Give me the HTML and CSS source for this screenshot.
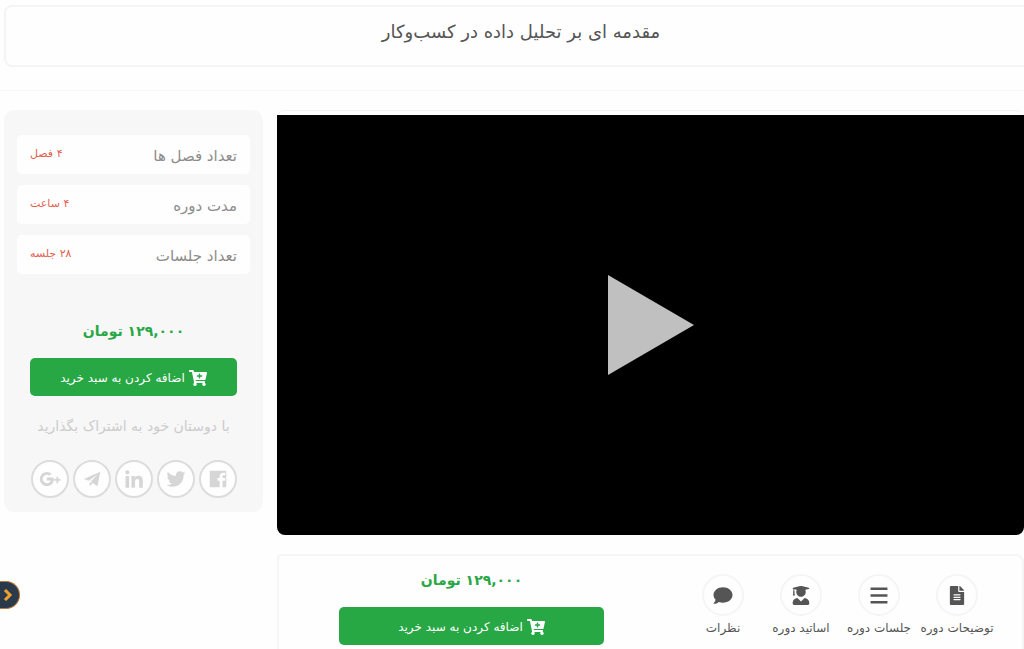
FILE: index.html
```html
<!DOCTYPE html>
<html lang="fa" dir="rtl">

<head>
  <meta charset="UTF-8">
  <meta name="viewport" content="width=device-width, initial-scale=1">
  <title>مقدمه ای بر تحلیل داده در کسب‌وکار</title>
  <link rel="stylesheet" href="styles.css">
</head>

<body>
  <svg class="sprite" aria-hidden="true">
    <symbol id="cart" viewBox="0 0 576 512">
      <path d="M504.717 320H211.572l6.545 32h268.418c15.401 0 26.816 14.301 23.403 29.319l-5.517 24.276C523.112 414.668 536 433.828 536 456c0 31.202-25.519 56.444-56.824 55.994-29.823-.429-54.35-24.631-55.155-54.447-.44-16.287 6.085-31.049 16.803-41.548H231.176C241.553 426.165 248 440.326 248 456c0 31.813-26.528 57.431-58.67 55.938-28.54-1.325-51.751-24.385-53.251-52.917-1.158-22.034 10.436-41.455 28.051-51.586L93.883 64H24C10.745 64 0 53.255 0 40V24C0 10.745 10.745 0 24 0h102.529c11.401 0 21.228 8.021 23.513 19.19L159.208 64H551.99c15.401 0 26.816 14.301 23.403 29.319l-47.273 208C525.637 312.246 515.923 320 504.717 320zM408 168h-48v-40c0-8.837-7.163-16-16-16h-16c-8.837 0-16 7.163-16 16v40h-48c-8.837 0-16 7.163-16 16v16c0 8.837 7.163 16 16 16h48v40c0 8.837 7.163 16 16 16h16c8.837 0 16-7.163 16-16v-40h48c8.837 0 16-7.163 16-16v-16c0-8.837-7.163-16-16-16z"/>
    </symbol>
  </svg>

  <header class="page-header">
    <h1>مقدمه ای بر تحلیل داده در کسب‌وکار</h1>
  </header>

  <div class="course">
    <main class="course-main">
      <div class="video-card">
        <button class="video" type="button" aria-label="پخش ویدیو">
          <svg class="play" viewBox="0 0 86 100"><path d="M0 0L86 50L0 100z"/></svg>
        </button>
      </div>

      <div class="tabs-card">
        <nav class="tabs">
          <a href="#description">
            <span class="tab-icon">
              <svg viewBox="0 0 384 512"><path d="M224 136V0H24C10.700 0 0 10.700 0 24v464c0 13.300 10.700 24 24 24h336c13.300 0 24-10.700 24-24V160H248c-13.200 0-24-10.800-24-24zm64 236c0 6.600-5.400 12-12 12H108c-6.600 0-12-5.400-12-12v-8c0-6.600 5.400-12 12-12h168c6.600 0 12 5.400 12 12v8zm0-64c0 6.600-5.400 12-12 12H108c-6.600 0-12-5.400-12-12v-8c0-6.600 5.400-12 12-12h168c6.600 0 12 5.400 12 12v8zm0-72v8c0 6.600-5.400 12-12 12H108c-6.600 0-12-5.400-12-12v-8c0-6.600 5.400-12 12-12h168c6.600 0 12 5.400 12 12zm96-114.100v6.100H256V0h6.100c6.400 0 12.500 2.500 17 7l97.900 98c4.500 4.500 7 10.600 7 16.900z"/></svg>
            </span>
            توضیحات دوره
          </a>
          <a href="#sessions">
            <span class="tab-icon">
              <svg viewBox="0 0 18 18"><path d="M1 1.500h16v2.400H1zM1 7.800h16v2.400H1zM1 14.100h16v2.400H1z"/></svg>
            </span>
            جلسات دوره
          </a>
          <a href="#teachers">
            <span class="tab-icon">
              <svg viewBox="0 0 448 512"><path d="M319.400 320.600L224 416l-95.400-95.400C57.100 323.700 0 382.200 0 454.400v9.600c0 26.500 21.500 48 48 48h352c26.500 0 48-21.500 48-48v-9.600c0-72.200-57.100-130.700-128.600-133.800zM13.600 79.800l6.400 1.500v58.400c-7 4.200-12 11.500-12 20.300 0 8.400 4.600 15.400 11.100 19.700L3.500 242c-1.700 6.900 2.100 14 7.600 14h41.800c5.500 0 9.300-7.100 7.600-14l-15.600-62.300C51.400 175.400 56 168.400 56 160c0-8.800-5-16.100-12-20.300V87.100l66 15.900c-8.600 17.200-14 36.400-14 57 0 70.700 57.300 128 128 128s128-57.300 128-128c0-20.600-5.300-39.800-14-57l96.300-23.200c18.200-4.400 18.200-27.100 0-31.500l-190.400-46c-13-3.100-26.700-3.100-39.700 0L13.600 48.200c-18.100 4.400-18.100 27.200 0 31.600z"/></svg>
            </span>
            اساتید دوره
          </a>
          <a href="#comments">
            <span class="tab-icon">
              <svg viewBox="0 0 512 512"><path d="M256 32C114.600 32 0 125.100 0 240c0 49.600 21.400 95 57 130.700C44.500 421.100 2.700 466 2.200 466.500c-2.200 2.300-2.800 5.700-1.500 8.700S4.800 480 8 480c66.300 0 116-31.800 140.600-51.400 32.700 12.300 69 19.400 107.400 19.400 141.400 0 256-93.100 256-208S397.400 32 256 32z"/></svg>
            </span>
            نظرات
          </a>
        </nav>
        <div class="buy">
          <p class="price">۱۲۹,۰۰۰ تومان</p>
          <button class="btn" type="button"><svg><use href="#cart"/></svg>اضافه کردن به سبد خرید</button>
        </div>
      </div>
    </main>

    <aside class="sidebar">
      <dl class="facts">
        <div><dt>تعداد فصل ها</dt><dd>۴ فصل</dd></div>
        <div><dt>مدت دوره</dt><dd>۴ ساعت</dd></div>
        <div><dt>تعداد جلسات</dt><dd>۲۸ جلسه</dd></div>
      </dl>
      <div class="buy">
        <p class="price">۱۲۹,۰۰۰ تومان</p>
        <button class="btn" type="button"><svg><use href="#cart"/></svg>اضافه کردن به سبد خرید</button>
      </div>
      <p class="share-title">با دوستان خود به اشتراک بگذارید</p>
      <div class="share">
        <a href="#facebook" aria-label="فیسبوک">
          <svg viewBox="0 0 24 24"><path d="M4 3h16a1 1 0 0 1 1 1v16a1 1 0 0 1-1 1h-3v-7h2.600l.4-3h-3V9.300c0-.9.400-1.400 1.500-1.400H20V5.200h-2c-2.600 0-4.200 1.400-4.200 3.900V11h-2.300v3h2.300v7H4a1 1 0 0 1-1-1V4a1 1 0 0 1 1-1z"/></svg>
        </a>
        <a href="#twitter" aria-label="توییتر">
          <svg viewBox="-40 -40 592 592"><path d="M459.370 151.716c.325 4.548.325 9.097.325 13.645 0 138.720-105.583 298.558-298.558 298.558-59.452 0-114.680-17.219-161.137-47.106 8.447.974 16.568 1.299 25.340 1.299 49.055 0 94.213-16.568 130.274-44.832-46.132-.975-84.792-31.188-98.112-72.772 6.498.974 12.995 1.624 19.818 1.624 9.421 0 18.843-1.300 27.614-3.573-48.081-9.747-84.143-51.980-84.143-102.985v-1.299c13.969 7.797 30.214 12.670 47.431 13.319-28.264-18.843-46.781-51.005-46.781-87.391 0-19.492 5.197-37.360 14.294-52.954 51.655 63.675 129.300 105.258 216.365 109.807-1.624-7.797-2.599-15.918-2.599-24.040 0-57.828 46.782-104.934 104.934-104.934 30.213 0 57.502 12.670 76.670 33.137 23.715-4.548 46.456-13.320 66.599-25.340-7.798 24.366-24.366 44.833-46.132 57.827 21.117-2.273 41.584-8.122 60.426-16.243-14.292 20.791-32.161 39.308-52.628 54.253z"/></svg>
        </a>
        <a href="#linkedin" aria-label="لینکدین">
          <svg viewBox="-56 -56 560 560"><path d="M100.280 448H7.400V148.900h92.880zM53.790 108.100C24.090 108.100 0 83.500 0 53.800a53.790 53.790 0 0 1 107.580 0c0 29.700-24.100 54.300-53.790 54.300zM447.900 448h-92.680V302.400c0-34.700-.7-79.200-48.290-79.200-48.290 0-55.690 37.700-55.690 76.700V448h-92.780V148.900h89.080v40.800h1.300c12.400-23.500 42.690-48.300 87.880-48.300 94 0 111.280 61.900 111.280 142.300V448z"/></svg>
        </a>
        <a href="#telegram" aria-label="تلگرام">
          <svg viewBox="0 0 24 24"><path d="M21 4L3 12l5.500 2L18 7l-7.500 8 7.500 5z"/><path d="M9.500 15v5l3-3z"/></svg>
        </a>
        <a href="#google-plus" aria-label="گوگل پلاس">
          <svg viewBox="0 0 24 24"><path d="M8.500 10.300v3.200h4.300c-.5 1.700-1.900 3-4.300 3a4.500 4.500 0 1 1 2.900-8L13.700 6.200A7.700 7.700 0 1 0 8.500 19.700c4.500 0 7.600-3.100 7.600-7.500 0-.7 0-1.200-.2-1.900zM19 9.500h2V12h2.500v2H21v2.500h-2V14h-2.500v-2H19z"/></svg>
        </a>
      </div>
    </aside>
  </div>

  <button class="drawer-toggle" type="button" aria-label="باز کردن منو">
    <svg viewBox="0 0 10 12"><path d="M2 1l5 5-5 5"/></svg>
  </button>
</body>

</html>
```

FILE: styles.css
```css
* {
  box-sizing: border-box;
}

body {
  margin: 0;
  background-color: #fefefe;
  color: #555;
  font-family: "DejaVu Sans", sans-serif;
  overflow: hidden;
}

h1,
p,
dl,
dd {
  margin: 0;
}

a {
  color: inherit;
  text-decoration: none;
}

svg {
  fill: currentColor;
}

.sprite {
  position: absolute;
  width: 0;
  height: 0;
}

.page-header {
  margin: 5px -14px 0 4px;
  height: 62px;
  border: 2px solid #f4f4f4;
  border-radius: 8px;
  text-align: center;
}

.page-header h1 {
  font-size: 18px;
  font-weight: normal;
  line-height: 50px;
}

.course {
  display: grid;
  grid-template-columns: minmax(0, 1fr) 259px;
  align-items: start;
  gap: 14px;
  margin-top: 23px;
  padding: 19px 0 0 4px;
  border-top: 1px solid #f6f6f6;
}

/* video */
.video-card {
  padding-top: 4px;
  border-top: 1px solid #f3f3f3;
  border-radius: 8px;
}

.video {
  display: flex;
  align-items: center;
  justify-content: center;
  width: 100%;
  aspect-ratio: 16 / 9;
  padding: 0;
  border: none;
  border-radius: 0 0 8px 8px;
  background-color: #000;
  color: #c0c0c0;
  cursor: pointer;
}

.play {
  width: 86px;
  height: 100px;
}

/* tabs */
.tabs-card {
  display: flex;
  justify-content: space-between;
  margin-top: 19px;
  padding: 9px 26px 20px 60px;
  border: 2px solid #f5f5f5;
  border-radius: 4px 8px 0 0;
}

.tabs {
  display: flex;
  padding-top: 9px;
}

.tabs a {
  display: flex;
  flex-direction: column;
  align-items: center;
  width: 78px;
  font-size: 12px;
  line-height: 24px;
  white-space: nowrap;
}

.tab-icon {
  display: flex;
  align-items: center;
  justify-content: center;
  width: 42px;
  height: 42px;
  border: 2px solid #f5f5f5;
  border-radius: 50%;
}

.tab-icon svg {
  width: 20px;
  height: 19px;
}

/* price and button */
.price {
  color: #28a745;
  font-size: 14px;
  font-weight: bold;
  line-height: 30px;
  text-align: center;
}

.btn {
  display: flex;
  align-items: center;
  justify-content: center;
  gap: 4px;
  width: 100%;
  height: 38px;
  padding-top: 2px;
  border: none;
  border-radius: 5px;
  background-color: #28a745;
  color: #fff;
  font-family: inherit;
  font-size: 12px;
  cursor: pointer;
}

.btn svg {
  width: 18px;
  height: 16px;
}

.tabs-card .buy {
  width: 265px;
}

.buy .btn {
  margin-top: 12px;
}

/* sidebar */
.sidebar {
  padding: 25px 13px 14px;
  border-radius: 10px;
  background-color: #f7f7f7;
}

.facts {
  display: grid;
  gap: 11px;
}

.facts div {
  display: flex;
  justify-content: space-between;
  height: 39px;
  padding: 0 13px;
  border-radius: 5px;
  background-color: #fefefe;
}

.facts dt {
  color: #8c8c8c;
  font-size: 15px;
  line-height: 42px;
}

.facts dd {
  color: #e2604f;
  font-size: 11px;
  line-height: 38px;
}

.sidebar .buy {
  margin-top: 42px;
  padding: 0 13px;
}

.share-title {
  margin-top: 14px;
  color: #ccc;
  font-size: 14px;
  line-height: 32px;
  text-align: center;
  white-space: nowrap;
}

.share {
  display: flex;
  justify-content: center;
  gap: 4px;
  margin-top: 18px;
}

.share a {
  display: flex;
  align-items: center;
  justify-content: center;
  width: 38px;
  height: 38px;
  border: 2px solid #dcdcdc;
  border-radius: 50%;
  background-color: #fefefe;
  color: #d6d6d6;
}

.share svg {
  width: 22px;
  height: 22px;
}

/* floating drawer handle, sticks out from the window edge */
.drawer-toggle {
  position: fixed;
  left: 0;
  bottom: 40px;
  display: flex;
  align-items: center;
  justify-content: flex-end;
  width: 20px;
  height: 28px;
  padding: 0 6px 0 0;
  border: 1px solid #b9783c;
  border-left: none;
  border-radius: 0 14px 14px 0;
  background-color: #2a3a4a;
  direction: ltr;
  cursor: pointer;
}

.drawer-toggle svg {
  width: 10px;
  height: 12px;
  fill: none;
  stroke: #f0a030;
  stroke-width: 3;
}
```
